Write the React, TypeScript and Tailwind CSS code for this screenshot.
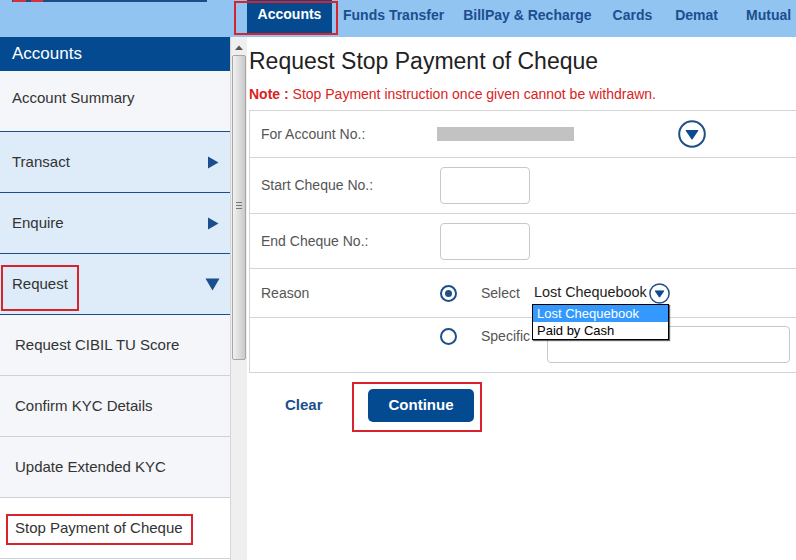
import React from "react";

const CircleDown = ({ size }: { size: number }) => (
  <svg width={size} height={size} viewBox="0 0 28 28">
    <circle cx="14" cy="14" r="12.8" fill="white" stroke="#1f4e87" strokeWidth="2" />
    <path d="M8.2 10.5 L19.8 10.5 L14 19 Z" fill="#0b4a8f" stroke="#0b4a8f" strokeWidth="1.2" strokeLinejoin="round" />
  </svg>
);

const ArrowRight = () => (
  <svg width="12" height="13" viewBox="0 0 12 13">
    <path d="M1 0.5 L11.5 6.5 L1 12.5 Z" fill="#1a4e8d" />
  </svg>
);

const ArrowDown = () => (
  <svg width="15" height="13" viewBox="0 0 15 13">
    <path d="M0.5 0.5 L14.5 0.5 L7.5 12.5 Z" fill="#1a4e8d" />
  </svg>
);

const Radio = ({ checked }: { checked?: boolean }) => (
  <div className="w-[17px] h-[17px] rounded-full border-2 border-[#1f4f88] bg-white flex items-center justify-center">
    {checked && <div className="w-[7px] h-[7px] rounded-full bg-[#1f4f88]" />}
  </div>
);

function SideRow({
  label,
  bg,
  border,
  sub,
  arrow,
  lift,
  children,
}: {
  label: string;
  bg: string;
  border: string;
  sub?: boolean;
  arrow?: "right" | "down";
  lift?: boolean;
  children?: React.ReactNode;
}) {
  return (
    <div className={`relative h-[61px] flex items-center justify-between border-b ${bg} ${border} ${sub ? "pl-[15px]" : "pl-[12px]"} pr-[11px]`}>
      <span className={`text-[15px] text-[#333] ${lift ? "-mt-[5px]" : ""}`}>{label}</span>
      {arrow === "right" && <ArrowRight />}
      {arrow === "down" && (
        <span className="-mr-[1px]">
          <ArrowDown />
        </span>
      )}
      {children}
    </div>
  );
}

export default function App() {
  return (
    <div
      className="w-[796px] h-[560px] overflow-hidden bg-white flex flex-col"
      style={{ fontFamily: '"Liberation Sans", Arial, sans-serif' }}
    >
      {/* Header */}
      <div className="h-[37px] bg-[#92c4f2] flex shrink-0">
        <div className="w-[247px] shrink-0">
          <div className="ml-[12px] w-[195px] h-[2px] bg-[#1f4a8a] flex">
            <div className="ml-[1px] w-[13px] h-[2px] bg-[#d8303a]" />
            <div className="ml-[5px] w-[12px] h-[2px] bg-[#d8303a]" />
          </div>
        </div>
        <div className="relative w-[85px] h-[34px] bg-[#054a8f] flex justify-center pt-[5px]">
          <span className="text-[14px] font-bold text-white leading-[18px]">Accounts</span>
          <div className="absolute -left-[13px] -right-[6px] top-[1px] -bottom-[1px] border-2 border-[#d8222c]" />
        </div>
        <div className="flex ml-[11px] pt-[7px] text-[14px] font-bold text-[#1b4f8e] leading-[16px]">
          <span>Funds Transfer</span>
          <span className="ml-[19px]">BillPay &amp; Recharge</span>
          <span className="ml-[21px]">Cards</span>
          <span className="ml-[23px]">Demat</span>
          <span className="ml-[28px]">Mutual</span>
        </div>
      </div>

      {/* Body */}
      <div className="flex flex-1 min-h-0">
        {/* Sidebar */}
        <div className="w-[231px] shrink-0 flex flex-col border-r border-[#d6d6d6]">
          <div className="h-[34px] bg-[#034a90] text-white text-[17px] pl-[12px] flex items-center shrink-0">
            Accounts
          </div>
          <SideRow label="Account Summary" bg="bg-[#f4f6f9]" border="border-[#1d4e89]" lift />
          <SideRow label="Transact" bg="bg-[#deebf8]" border="border-[#1d4e89]" arrow="right" />
          <SideRow label="Enquire" bg="bg-[#deebf8]" border="border-[#1d4e89]" arrow="right" />
          <SideRow label="Request" bg="bg-[#deebf8]" border="border-[#1d4e89]" arrow="down">
            <div className="absolute left-[1px] top-[11px] w-[78px] h-[46px] border-2 border-[#d8222c]" />
          </SideRow>
          <SideRow label="Request CIBIL TU Score" bg="bg-[#f4f6f9]" border="border-[#cdd1d8]" sub />
          <SideRow label="Confirm KYC Details" bg="bg-[#f4f6f9]" border="border-[#cdd1d8]" sub />
          <SideRow label="Update Extended KYC" bg="bg-[#f4f6f9]" border="border-[#cdd1d8]" sub />
          <SideRow label="Stop Payment of Cheque" bg="bg-white" border="border-[#cdd1d8]" sub>
            <div className="absolute left-[6px] top-[16px] w-[187px] h-[31px] border-2 border-[#d8222c]" />
          </SideRow>
        </div>

        {/* Scrollbar */}
        <div className="w-[16px] shrink-0 bg-[#efefef] flex flex-col items-center">
          <div className="h-[18px] flex items-center justify-center pt-[2px]">
            <svg width="8" height="5" viewBox="0 0 8 5">
              <path d="M0 5 L4 0.5 L8 5 Z" fill="#555" />
            </svg>
          </div>
          <div className="w-[14px] h-[305px] rounded-[2px] border border-[#a6a6a6] bg-gradient-to-r from-[#f2f2f2] to-[#c9c9c9] flex items-center justify-center">
            <div className="flex flex-col gap-[2px] -mt-[4px]">
              <div className="w-[6px] h-[1px] bg-[#777]" />
              <div className="w-[6px] h-[1px] bg-[#777]" />
              <div className="w-[6px] h-[1px] bg-[#777]" />
            </div>
          </div>
        </div>

        {/* Main */}
        <div className="flex-1 pl-[2px] min-w-0">
          <div className="mt-[9px] h-[30px] leading-[30px] text-[23px] text-[#222]">
            Request Stop Payment of Cheque
          </div>
          <div className="mt-[10px] h-[16px] leading-[16px] text-[14px] text-[#d9231d]">
            <span className="font-bold">Note :</span> Stop Payment instruction once given cannot be withdrawn.
          </div>

          <div className="mt-[8px] w-[580px] border-l border-t border-b border-[#d4d4d4] text-[14px] text-[#555]">
            {/* Account */}
            <div className="h-[47px] flex items-center border-b border-[#d4d4d4]">
              <div className="w-[190px] pl-[11px]">For Account No.:</div>
              <div className="-ml-[3px] w-[137px] h-[14px] bg-[#c2c2c2]" />
              <div className="ml-[104px] flex">
                <CircleDown size={28} />
              </div>
            </div>
            {/* Start */}
            <div className="h-[56px] flex items-center border-b border-[#d4d4d4]">
              <div className="w-[190px] pl-[11px]">Start Cheque No.:</div>
              <div className="w-[90px] h-[37px] border border-[#c8c8c8] rounded-[4px] bg-white" />
            </div>
            {/* End */}
            <div className="h-[55px] flex items-center border-b border-[#d4d4d4]">
              <div className="w-[190px] pl-[11px]">End Cheque No.:</div>
              <div className="w-[90px] h-[37px] border border-[#c8c8c8] rounded-[4px] bg-white" />
            </div>
            {/* Reason */}
            <div className="h-[49px] flex items-center border-b border-[#d4d4d4]">
              <div className="w-[190px] pl-[11px]">Reason</div>
              <Radio checked />
              <div className="ml-[24px] w-[53px]">Select</div>
              <div className="relative flex items-center h-[20px]">
                <span className="text-[14.4px] text-[#222]">Lost Chequebook</span>
                <span className="ml-[2px] flex">
                  <CircleDown size={21} />
                </span>
                <div className="absolute left-[-2px] top-[21px] w-[137px] bg-white border border-black shadow-[1px_1px_1px_rgba(0,0,0,0.6)] text-[13px] leading-[17px] text-black z-10">
                  <div className="h-[17px] bg-[#3399ff] text-white pl-[4px]">Lost Chequebook</div>
                  <div className="h-[17px] pl-[4px]">Paid by Cash</div>
                </div>
              </div>
            </div>
            {/* Specific */}
            <div className="h-[54px] flex items-start pt-[8px]">
              <div className="w-[190px]" />
              <div className="mt-[2px]">
                <Radio />
              </div>
              <div className="ml-[24px] w-[66px] mt-[0px]">Specific</div>
              <div className="w-[243px] h-[37px] border border-[#c8c8c8] rounded-[4px] bg-white" />
            </div>
          </div>

          {/* Buttons */}
          <div className="mt-[16px] flex items-center pl-[36px]">
            <div className="w-[83px] text-[15px] font-bold text-[#1a4f8f]">Clear</div>
            <div className="relative">
              <div className="w-[106px] h-[33px] rounded-[5px] bg-[#034a90] text-white text-[15px] font-bold flex items-center justify-center">
                Continue
              </div>
              <div className="absolute -left-[16px] -right-[8px] -top-[7px] -bottom-[10px] border-2 border-[#d8222c]" />
            </div>
          </div>
        </div>
      </div>
    </div>
  );
}
